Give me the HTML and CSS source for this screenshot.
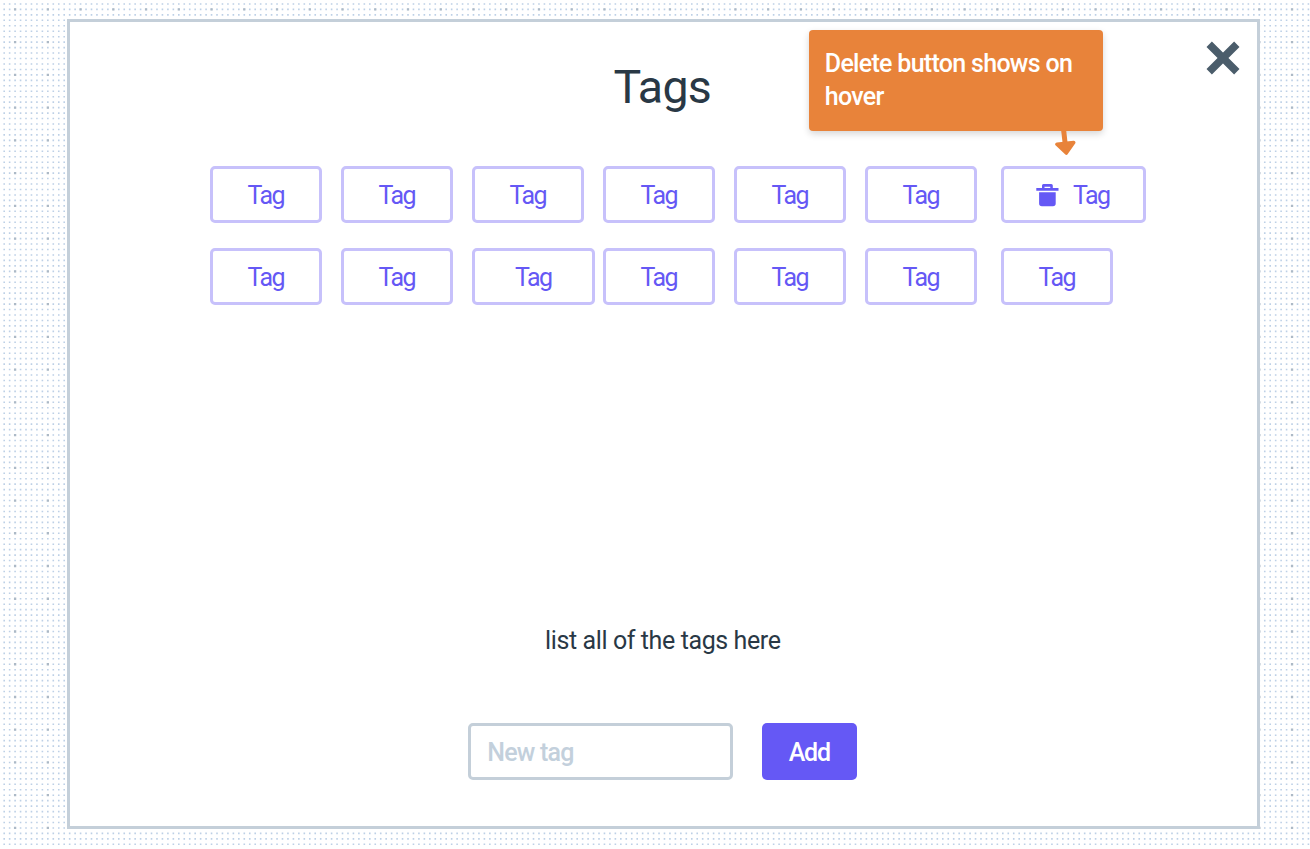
FILE: index.html
```html
<!DOCTYPE html>
<html lang="en">
<head>
<meta charset="utf-8">
<title>Tags</title>
<link rel="stylesheet" href="styles.css">
</head>
<body>
<svg class="grid-dots" width="1310" height="849" aria-hidden="true"></svg>
<main class="modal">
  <button class="close" aria-label="Close">
    <svg width="34" height="34" viewBox="0 0 34 34"><path d="M3.2 3.2 30.8 30.8M30.8 3.2 3.2 30.8" stroke="#4b5d6b" stroke-width="7.6"/></svg>
  </button>
  <h1 class="title">Tags</h1>
  <div class="tags">
    <button class="tag">Tag</button>
    <button class="tag">Tag</button>
    <button class="tag">Tag</button>
    <button class="tag">Tag</button>
    <button class="tag">Tag</button>
    <button class="tag">Tag</button>
    <button class="tag tag-hover"><svg class="trash" width="23" height="23" viewBox="0 0 23 23"><path fill="#6558f5" fill-rule="evenodd" d="M6 4V1.5Q6 0 7.5 0H15.300Q16.800 0 16.800 1.500V4H22.500V6.700H.3V4ZM8.500 4H14.300V2.700H8.500ZM3.100 8.200H19.700V19.500Q19.700 22.300 16.900 22.300H5.900Q3.100 22.300 3.100 19.500Z"/></svg>Tag</button>
    <button class="tag">Tag</button>
    <button class="tag">Tag</button>
    <button class="tag tag-wide">Tag</button>
    <button class="tag">Tag</button>
    <button class="tag">Tag</button>
    <button class="tag">Tag</button>
    <button class="tag">Tag</button>
  </div>
  <p class="note">list all of the tags here</p>
  <form class="new-tag">
    <input class="field" type="text" placeholder="New tag" aria-label="New tag">
    <button class="add" type="button">Add</button>
  </form>
  <aside class="callout">Delete button shows on hover
    <svg class="arrow" width="22" height="28" viewBox="0 0 22 28"><path d="M8.500 0 10.100 14" stroke="#e8833a" stroke-width="5"/><path d="M2 15.200 18.700 13.500 11.300 24Z" fill="#e8833a" stroke="#e8833a" stroke-width="3.600" stroke-linejoin="round"/></svg>
  </aside>
</main>
<script src="grid.js"></script>
</body>
</html>
```
FILE: grid.js
```js
// Dotted canvas: a fine grid with a stronger dot on every sixth row and column.
const svg = document.querySelector('.grid-dots');
const major = 32.742;
const minor = major / 6;

function dots(step, size, color) {
  let d = '';
  for (let y = 9.4 % step; y < 849; y += step) {
    for (let x = 15.1 % step; x < 1310; x += step) {
      d += `M${(x - size / 2).toFixed(2)} ${y.toFixed(2)}h${size}`;
    }
  }
  const path = document.createElementNS('http://www.w3.org/2000/svg', 'path');
  path.setAttribute('d', d);
  path.setAttribute('stroke', color);
  path.setAttribute('stroke-width', size);
  svg.append(path);
}

dots(minor, 1.6, '#bdd0e6');
dots(major, 2.3, '#acb9c6');
```
FILE: styles.css
```css
* { box-sizing: border-box; }
body {
  margin: 0;
  height: 849px;
  overflow: hidden;
  display: flex;
  padding: 19.300px 0 0 67.300px;
  background: #fff;
  font-family: Roboto, "Liberation Sans", sans-serif;
  font-size: 25px;
  color: #293845;
}
button, input { font: inherit; margin: 0; }
.grid-dots { position: absolute; left: 0; top: 0; z-index: -1; }
.modal {
  position: relative;
  width: 1193px;
  height: 810px;
  border: 3px solid #c4cfd9;
  background: #fff;
  display: flex;
  flex-direction: column;
}
.close {
  position: absolute;
  top: 19px;
  right: 17.600px;
  width: 34px;
  height: 34px;
  padding: 0;
  border: 0;
  background: none;
}
.close svg { display: block; }
.title {
  margin: 35px 0 0;
  padding-right: 3px;
  height: 60px;
  line-height: 61px;
  text-align: center;
  font-size: 46.500px;
  font-weight: 400;
  letter-spacing: -.7px;
}
.tags {
  margin: 49px 0 0 140px;
  display: grid;
  grid-template-columns: repeat(6, 131px) 150px;
  grid-auto-rows: 57px;
  row-gap: 25px;
}
.tag {
  width: 112px;
  padding: 1px 1px 0 0;
  border: 3px solid #c7c1fb;
  border-radius: 5px;
  background: #fff;
  color: #6558f5;
  font-weight: 400;
  letter-spacing: -1.500px;
  display: flex;
  align-items: center;
  justify-content: center;
}
.tag:nth-child(7n) { margin-left: 5px; }
.tag-hover { width: 145px; gap: 14px; padding-right: 2px; }
.tag-wide { width: 123px; }
.note {
  margin: 318px 0 0;
  padding-right: 2px;
  height: 34px;
  line-height: 35px;
  text-align: center;
  letter-spacing: -.4px;
}
.new-tag { display: flex; gap: 29px; margin: 66px 0 0 398px; }
.field {
  width: 265px;
  height: 57px;
  padding: 1px 16px 0;
  border: 3px solid #c4cfd9;
  border-radius: 5px;
  background: #fff;
  font-weight: 500;
  letter-spacing: -.8px;
}
.field::placeholder { color: #c3d0dc; opacity: 1; }
.add {
  width: 95px;
  height: 57px;
  padding: 1px 1px 0 0;
  border: 0;
  border-radius: 5px;
  background: #6558f5;
  color: #fff;
  font-weight: 500;
  letter-spacing: -1.200px;
}
.callout {
  position: absolute;
  left: 738.500px;
  top: 7.300px;
  width: 294px;
  height: 101px;
  padding: 17px 16px;
  border-radius: 4px;
  background: #e8833a;
  color: #fff;
  font-weight: 500;
  line-height: 33.500px;
  letter-spacing: -.7px;
  box-shadow: 0 3px 7px rgba(0, 0, 0, .16);
}
.arrow { position: absolute; left: 246px; top: 99.700px; }
```
